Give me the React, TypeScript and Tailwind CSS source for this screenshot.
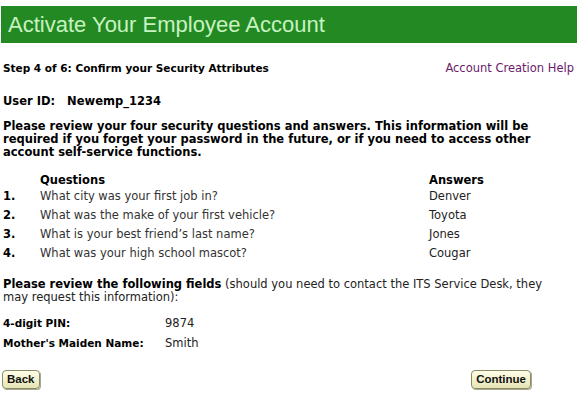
import React from 'react'

const questions = [
  { q: 'What city was your first job in?', a: 'Denver' },
  { q: 'What was the make of your first vehicle?', a: 'Toyota' },
  { q: 'What is your best friend\u2019s last name?', a: 'Jones' },
  { q: 'What was your high school mascot?', a: 'Cougar' },
]

function PillButton({ label }: { label: string }) {
  return (
    <button className="rounded-[4px] border border-[#8a8a6a] bg-gradient-to-b from-[#fefee8] to-[#e6e4b4] px-[4px] h-[19px] text-[11.5px] font-bold leading-none text-[#111] shadow-[1px_1px_0_#a8a890] font-['Liberation_Sans',Arial,sans-serif]">
      {label}
    </button>
  )
}

export default function App() {
  return (
    <div className="w-[577px] h-[410px] bg-white overflow-hidden font-['DejaVu_Sans',Verdana,sans-serif] text-[11.5px] text-black">
      <div className="pt-[6px] pl-[1px]">
        <div className="bg-[#238a23] h-[37px] flex items-center pl-[7px]">
          <h1 className="font-['Liberation_Sans',Arial,sans-serif] text-[22px] text-[#c8f2c0] leading-none">
            Activate Your Employee Account
          </h1>
        </div>
      </div>

      <div className="px-[3px]">
        <div className="flex justify-between items-center mt-[19px] h-[14px]">
          <span className="font-bold text-[10.5px]">Step 4 of 6: Confirm your Security Attributes</span>
          <a className="text-[#6a1a6a]">Account Creation Help</a>
        </div>

        <div className="mt-[18px] font-bold h-[14px] leading-[14px]">
          User ID:&nbsp;&nbsp; Newemp_1234
        </div>

        <p className="mt-[12px] font-bold leading-[13px] w-[540px]">
          Please review your four security questions and answers. This information will be
          required if you forget your password in the future, or if you need to access other
          account self-service functions.
        </p>

        <div className="mt-[14px]">
          <div className="flex font-bold h-[14px] leading-[14px]">
            <span className="w-[37px]" />
            <span className="w-[389px]">Questions</span>
            <span>Answers</span>
          </div>
          {questions.map((row, i) => (
            <div key={i} className="flex h-[19px] items-center">
              <span className="w-[37px] font-bold">{i + 1}.</span>
              <span className="w-[389px] text-[#333]">{row.q}</span>
              <span className="text-[#222]">{row.a}</span>
            </div>
          ))}
        </div>

        <p className="mt-[15px] leading-[13px] text-[#222] w-[552px]">
          <b className="text-black">Please review the following fields</b> (should you need to contact the ITS Service Desk, they may request this information):
        </p>

        <div className="mt-[10px]">
          <div className="flex h-[20px] items-center">
            <span className="w-[162px] font-bold text-[10.5px]">4-digit PIN:</span>
            <span className="text-[#222]">9874</span>
          </div>
          <div className="flex h-[20px] items-center">
            <span className="w-[162px] font-bold text-[10.5px]">Mother's Maiden Name:</span>
            <span className="text-[#222]">Smith</span>
          </div>
        </div>

        <div className="flex justify-between mt-[16px] pr-[43px] -ml-[1px]">
          <PillButton label="Back" />
          <PillButton label="Continue" />
        </div>
      </div>
    </div>
  )
}
